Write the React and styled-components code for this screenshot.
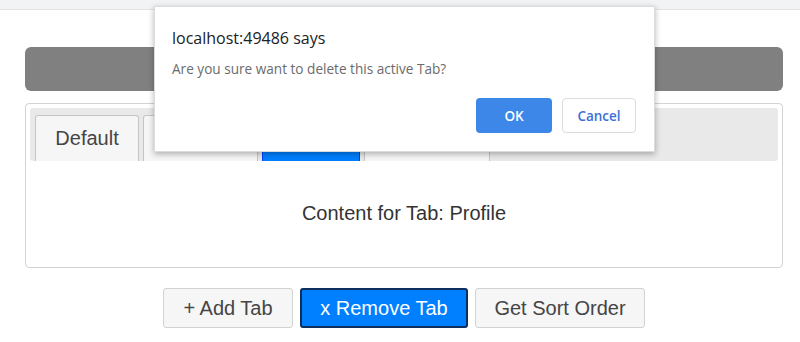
import React, { useState } from 'react'
import styled, { createGlobalStyle } from 'styled-components'

const TABS = [
  { id: 'default', label: 'Default', width: 104 },
  { id: 'home', label: 'Home', width: 115 },
  { id: 'profile', label: 'Profile', width: 98 },
  { id: 'settings', label: 'Settings', width: 126 },
];

const GlobalStyle = createGlobalStyle`
  body {
    margin: 0;
    background: #fff;
    font-family: "Liberation Sans", Arial, sans-serif;
  }
`;

const App = () => {
  const [active] = useState('profile');
  const current = TABS.find(t => t.id === active);

  return (
    <>
      <GlobalStyle />
      <TopStrip />
      <Page>
        <TitleBar />
        <TabsBox>
          <TabHeader>
            {TABS.map(tab => (
              <Tab key={tab.id} $active={tab.id === active} $w={tab.width}>
                {tab.label}
              </Tab>
            ))}
          </TabHeader>
          <TabContent>Content for Tab: {current.label}</TabContent>
        </TabsBox>

        {/* 버튼 */}
        <BtnRow>
          <ActionBtn $w={130}>+ Add Tab</ActionBtn>
          <ActionBtn $w={168} $primary>x Remove Tab</ActionBtn>
          <ActionBtn $w={170}>Get Sort Order</ActionBtn>
        </BtnRow>
      </Page>

      {/* confirm 창 */}
      <Dialog>
        <DialogTitle>localhost:49486 says</DialogTitle>
        <DialogMsg>Are you sure want to delete this active Tab?</DialogMsg>
        <DialogBtns>
          <OkBtn>OK</OkBtn>
          <CancelBtn>Cancel</CancelBtn>
        </DialogBtns>
      </Dialog>
    </>
  )
}

const TopStrip = styled.div`
  height: 9px;
  background: #f1f3f4;
  border-bottom: 1px solid #e3e3e3;
`;

const Page = styled.div`
  width: 758px;
  margin-left: 25px;
  padding-top: 37px;
`;

const TitleBar = styled.div`
  height: 44px;
  border-radius: 6px;
  background: #808080;
`;

const TabsBox = styled.div`
  margin-top: 12px;
  height: 165px;
  box-sizing: border-box;
  border: 1px solid #d3d3d3;
  border-radius: 4px;
  padding: 4px;
  display: flex;
  flex-direction: column;
`;

const TabHeader = styled.div`
  display: flex;
  align-items: flex-end;
  gap: 4px;
  height: 53px;
  box-sizing: border-box;
  padding: 7px 5px 0;
  background: #e9e9e9;
  border-radius: 3px;
`;

const Tab = styled.div`
  width: ${p => p.$w}px;
  height: 46px;
  box-sizing: border-box;
  display: flex;
  align-items: center;
  justify-content: center;
  font-size: 20px;
  color: ${p => p.$active ? '#fff' : '#454545'};
  background: ${p => p.$active ? '#007fff' : '#f6f6f6'};
  border: 1px solid ${p => p.$active ? '#003eff' : '#c5c5c5'};
  border-bottom: none;
  border-radius: 3px 3px 0 0;
`;

const TabContent = styled.div`
  flex: 1;
  display: flex;
  align-items: center;
  justify-content: center;
  font-size: 20px;
  color: #333;
  padding-top: 2px;
`;

const BtnRow = styled.div`
  display: flex;
  justify-content: center;
  gap: 7px;
  margin-top: 20px;
`;

const ActionBtn = styled.button`
  width: ${p => p.$w}px;
  height: 40px;
  font-family: "Liberation Sans", Arial, sans-serif;
  font-size: 20px;
  border-radius: 3px;
  color: ${p => p.$primary ? '#fff' : '#454545'};
  background: ${p => p.$primary ? '#007fff' : '#f6f6f6'};
  border: ${p => p.$primary ? '2px solid #0d2f5e' : '1px solid #d3d3d3'};
`;

const Dialog = styled.div`
  position: absolute;
  left: 154px;
  top: 6px;
  width: 501px;
  height: 146px;
  box-sizing: border-box;
  padding: 21px 18px 18px 17px;
  background: #fff;
  border: 1px solid #dcdcdc;
  box-shadow: 0 2px 6px rgba(0, 0, 0, 0.3);
  font-family: "Open Sans", "Noto Sans", sans-serif;
  display: flex;
  flex-direction: column;
`;

const DialogTitle = styled.div`
  font-size: 16px;
  line-height: 21px;
  color: #202124;
`;

const DialogMsg = styled.div`
  margin-top: 11px;
  font-size: 13.6px;
  line-height: 18px;
  color: #6b6b6b;
`;

const DialogBtns = styled.div`
  margin-top: auto;
  display: flex;
  justify-content: flex-end;
  gap: 10px;
`;

const OkBtn = styled.button`
  width: 76px;
  height: 35px;
  border: none;
  border-radius: 4px;
  background: #3c87e8;
  color: #fff;
  font-family: "Open Sans", sans-serif;
  font-weight: 600;
  font-size: 13.5px;
`;

const CancelBtn = styled.button`
  width: 74px;
  height: 35px;
  border: 1px solid #dadce0;
  border-radius: 4px;
  background: #fff;
  color: #3c6fd6;
  font-family: "Open Sans", sans-serif;
  font-weight: 600;
  font-size: 13.5px;
`;

export default App;
